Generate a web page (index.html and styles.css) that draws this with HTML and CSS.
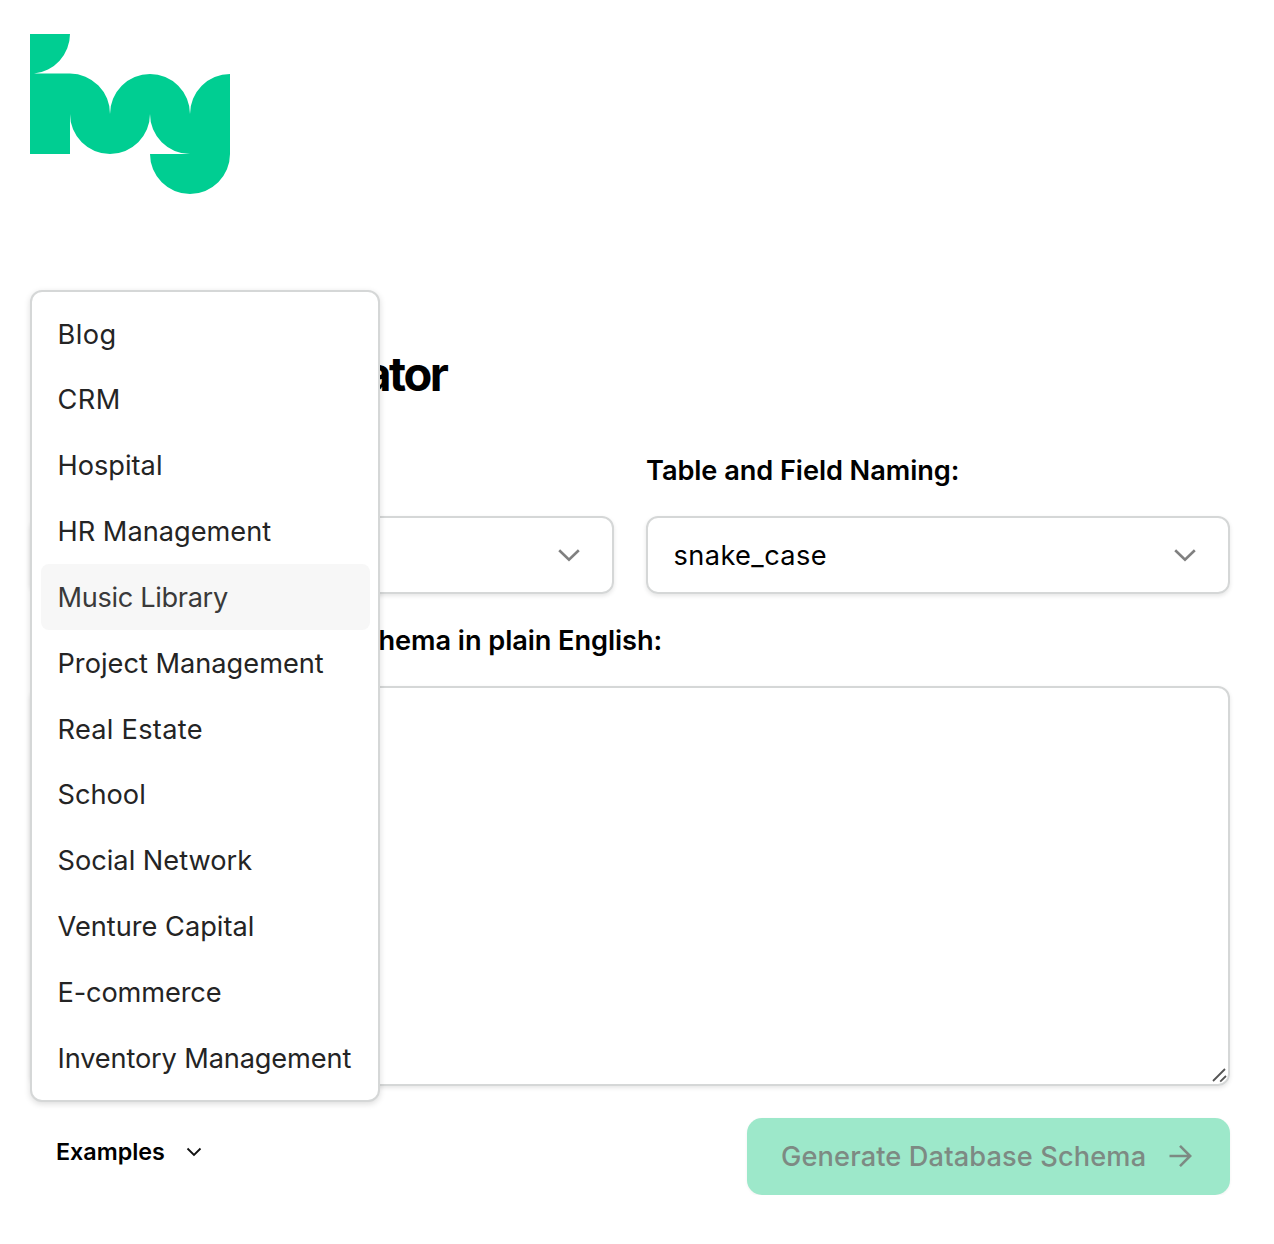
FILE: index.html
```html
<!DOCTYPE html>
<html lang="en">
<head>
<meta charset="utf-8">
<title>Database Generator</title>
<link rel="stylesheet" href="styles.css">
</head>
<body>
<main class="page">
  <svg class="logo" viewBox="0 0 200 160" role="img" aria-label="Ivy">
    <path d="M0 0H40A40 40 0 0 1 4 39.6H40A40 40 0 0 1 80 80A40 40 0 0 1 160 80A40 40 0 0 1 200 40V120A40 40 0 0 1 120 120H160A40 40 0 0 1 120 80A40 40 0 0 1 40 80V120H0Z"/>
  </svg>

  <h1 class="title">Database Generator</h1>

  <div class="fields">
    <div class="field">
      <label class="label">Database:</label>
      <div class="select">
        <span></span>
        <svg class="chevron" viewBox="0 0 24 24"><path d="M2.2 7.2 12 16.8 21.8 7.2"/></svg>
      </div>
    </div>
    <div class="field">
      <label class="label">Table and Field Naming:</label>
      <div class="select">
        <span class="value">snake_case</span>
        <svg class="chevron" viewBox="0 0 24 24"><path d="M2.2 7.2 12 16.8 21.8 7.2"/></svg>
      </div>
    </div>
  </div>

  <label class="label prompt-label">Describe your database schema in plain English:</label>
  <div class="textarea">
    <svg class="grip" viewBox="0 0 16 16"><path d="M2 14 14 2M9.2 14.6 15 9"/></svg>
  </div>

  <div class="actions">
    <div class="examples">
      <button class="examples-button">Examples
        <svg class="chevron-small" viewBox="0 0 16 16"><path d="M1.5 4.5 8 11 14.5 4.5"/></svg>
      </button>
      <div class="menu">
        <div class="item wider">Blog</div>
        <div class="item wider">CRM</div>
        <div class="item">Hospital</div>
        <div class="item">HR Management</div>
        <div class="item active tighter">Music Library</div>
        <div class="item">Project Management</div>
        <div class="item wide">Real Estate</div>
        <div class="item">School</div>
        <div class="item">Social Network</div>
        <div class="item">Venture Capital</div>
        <div class="item tight">E-commerce</div>
        <div class="item tight">Inventory Management</div>
      </div>
    </div>
    <button class="generate">Generate Database Schema
      <svg class="arrow" viewBox="0 0 24 24"><path d="M1.5 12H22M12 1.8 22.2 12 12 22.2"/></svg>
    </button>
  </div>
</main>
</body>
</html>
```
FILE: styles.css
```css
* { box-sizing: border-box; }

body {
  margin: 0;
  background: #fff;
  color: #000;
  font-family: Inter, "Liberation Sans", sans-serif;
  font-size: 27.2px;
}

.page {
  display: flex;
  flex-direction: column;
  align-items: flex-start;
  width: 1230px;
  padding: 34px 0 0 30px;
}

svg { display: block; flex: none; fill: none; }

.logo { width: 200px; height: 160px; fill: #00ce92; }

.title {
  width: 418px;
  margin: 150px 0 0;
  font-size: 47px;
  font-weight: 700;
  line-height: 60px;
  letter-spacing: -2.4px;
  white-space: nowrap;
}

.fields {
  display: grid;
  grid-template-columns: 1fr 1fr;
  gap: 32px;
  width: 100%;
  margin-top: 47px;
}

.field { display: flex; flex-direction: column; gap: 25px; }

.label {
  font-weight: 600;
  line-height: 40px;
  letter-spacing: -.07px;
  white-space: nowrap;
}

.select {
  display: flex;
  align-items: center;
  justify-content: space-between;
  height: 78px;
  padding: 0 31px 0 25.5px;
  border: 2px solid #d5d7d7;
  border-radius: 12px;
  box-shadow: 0 2px 4px rgba(0, 0, 0, .1);
}

.value { letter-spacing: .4px; }

.chevron { width: 24px; height: 24px; stroke: #808080; stroke-width: 2.6; }

.prompt-label { margin-top: 27px; }

.textarea {
  display: flex;
  align-items: flex-end;
  justify-content: flex-end;
  width: 100%;
  height: 400px;
  margin-top: 25px;
  border: 2px solid #d5d7d7;
  border-radius: 12px;
  box-shadow: 0 2px 4px rgba(0, 0, 0, .1);
}

.grip { width: 16px; height: 16px; margin: 0 1px 1px 0; stroke: #555; stroke-width: 1.8; }

.actions {
  display: flex;
  align-items: flex-start;
  justify-content: space-between;
  width: 100%;
  margin-top: 32px;
}

.examples { position: relative; }

button { border: 0; font-family: inherit; }

.examples-button {
  display: flex;
  align-items: center;
  gap: 21px;
  height: 67px;
  padding: 0 26px;
  background: none;
  color: #000;
  font-size: 23.3px;
  font-weight: 600;
}

.chevron-small { width: 16px; height: 16px; stroke: #111; stroke-width: 1.8; }

.menu {
  position: absolute;
  bottom: 83.5px;
  left: 0;
  width: 350px;
  padding: 8.5px 8px 9px 9px;
  border: 2px solid #d5d7d7;
  border-radius: 12px;
  background: #fff;
  box-shadow: 0 2px 6px rgba(0, 0, 0, .14);
  color: #242424;
}

.item {
  height: 65.83px;
  padding-left: 16.5px;
  border-radius: 8px;
  line-height: 68px;
  white-space: nowrap;
}

.active { background: #f7f7f7; color: #3a3a3a; }
.wider { letter-spacing: .4px; }
.wide { letter-spacing: .28px; }
.tight { letter-spacing: -.14px; }
.tighter { letter-spacing: -.34px; }

.generate {
  display: flex;
  align-items: center;
  justify-content: space-between;
  width: 483px;
  height: 77px;
  padding: 0 38px 0 34px;
  border-radius: 15px;
  background: #9de8ca;
  box-shadow: 0 1px 3px rgba(0, 0, 0, .06);
  color: #7d8a83;
  font-size: 27.2px;
  font-weight: 500;
  letter-spacing: .13px;
}

.arrow { width: 24px; height: 24px; margin-bottom: 1px; stroke: #7d8a83; stroke-width: 2.6; }
```
